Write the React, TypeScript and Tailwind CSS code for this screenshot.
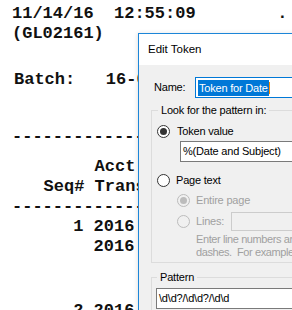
import clsx from "clsx";

const docLines = [
  { text: "11/14/16  12:55:09        .", cls: "h-[20px]" },
  { text: "(GL02161)", cls: "h-[20px]" },
  { text: "Batch:   16-0001", cls: "h-[20px] mt-[26px] pl-[2px]" },
  { text: "------------------------------", cls: "h-[20px] mt-[37px]" },
  { text: "        Acct", cls: "h-[20px] mt-[10px] pl-[1px]" },
  { text: "   Seq# Trans", cls: "h-[20px] pl-[1px]" },
  { text: "------------------------------", cls: "h-[20px]" },
  { text: "      1 2016", cls: "h-[20px]" },
  { text: "        2016", cls: "h-[20px]" },
  { text: "      2 2016", cls: "h-[20px] mt-[44px]" },
];

interface RadioProps {
  checked?: boolean;
  disabled?: boolean;
}

const Radio: React.FC<RadioProps> = ({ checked, disabled }) => (
  <span
    className={clsx(
      "w-[13px] h-[13px] rounded-full border flex items-center justify-center shrink-0",
      disabled ? "border-[#bcbcbc] bg-[#f0f0f0]" : "border-[#333333] bg-white"
    )}
  >
    {checked && (
      <span
        className={clsx(
          "w-[7px] h-[7px] rounded-full",
          disabled ? "bg-[#bcbcbc]" : "bg-[#333333]"
        )}
      />
    )}
  </span>
);

const EditTokenDialog = () => (
  <div className="absolute left-[138px] top-[33px] w-[230px] h-[300px] border border-[#1c86d8] bg-[#f0f0f0] font-['Liberation_Sans',Arial,sans-serif] text-[11px] tracking-[-0.2px] text-black shadow-[-1px_0_4px_rgba(0,0,0,0.1)]">
    {/* barra de título */}
    <div className="h-[31px] bg-white flex items-center pl-[9px] text-[11.5px] tracking-normal">Edit Token</div>

    <div className="pl-[12px] pt-[12px]">
      {/* nome */}
      <div className="flex items-center">
        <span className="w-[44px] pl-[3px]">Name:</span>
        <div className="h-[21px] flex-1 border border-[#0078d7] bg-white flex items-center pl-[2px]">
          <span className="bg-[#0078d7] text-white leading-[16px] px-[1px] whitespace-nowrap">Token for Date</span>
          <span className="w-px h-[12px] bg-[#ff8c00]" />
        </div>
      </div>

      {/* Look for the pattern in */}
      <div className="mt-[12px] h-[153px] border border-[#dcdcdc]">
        <div className="-mt-[8px] ml-[6px] px-[3px] w-fit bg-[#f0f0f0] leading-[14px]">Look for the pattern in:</div>

        <div className="mt-[8px] pl-[5px] h-[13px] flex items-center gap-[7px] leading-[13px]">
          <Radio checked />
          <span>Token value</span>
        </div>
        <div className="mt-[3px] ml-[28px] h-[21px] border border-[#7a7a7a] bg-white flex items-center pl-[2px] whitespace-nowrap">
          %(Date and Subject)
        </div>

        <div className="mt-[12px] pl-[5px] h-[13px] flex items-center gap-[6px] leading-[13px]">
          <Radio />
          <span>Page text</span>
        </div>

        <div className="mt-[7px] pl-[25px] h-[13px] flex items-center gap-[6px] leading-[13px] text-[#a0a0a0]">
          <Radio checked disabled />
          <span>Entire page</span>
        </div>

        <div className="mt-[5px] pl-[25px] h-[19px] flex items-center gap-[6px] text-[#a0a0a0]">
          <Radio disabled />
          <span className="w-[29px]">Lines:</span>
          <div className="h-[19px] flex-1 border border-[#cccccc] bg-[#f0f0f0]" />
        </div>

        <div className="mt-[2px] pl-[44px] leading-[13px] tracking-[-0.4px] text-[#a0a0a0] whitespace-nowrap">
          <div>Enter line numbers and ranges separated by commas or</div>
          <div>dashes.&nbsp; For example, 1,3,5-12</div>
        </div>
      </div>

      {/* Pattern */}
      <div className="mt-[14px] h-[60px] border border-[#dcdcdc]">
        <div className="-mt-[8px] ml-[5px] px-[3px] w-fit bg-[#f0f0f0] leading-[14px]">Pattern</div>
        <div className="mt-[4px] ml-[4px] h-[21px] border border-[#7a7a7a] bg-white flex items-center pl-[2px] whitespace-nowrap">
          \d\d?/\d\d?/\d\d
        </div>
      </div>
    </div>
  </div>
);

export default function App() {
  return (
    <div className="relative w-[292px] h-[310px] overflow-hidden bg-white">
      <div className="pt-[4px] pl-[12px] font-['Liberation_Mono','Courier_New',monospace] font-bold text-[17px] leading-[20px] text-[#111111] whitespace-pre">
        {docLines.map((line, i) => (
          <div key={i} className={line.cls}>
            {line.text}
          </div>
        ))}
      </div>
      <EditTokenDialog />
    </div>
  );
}
